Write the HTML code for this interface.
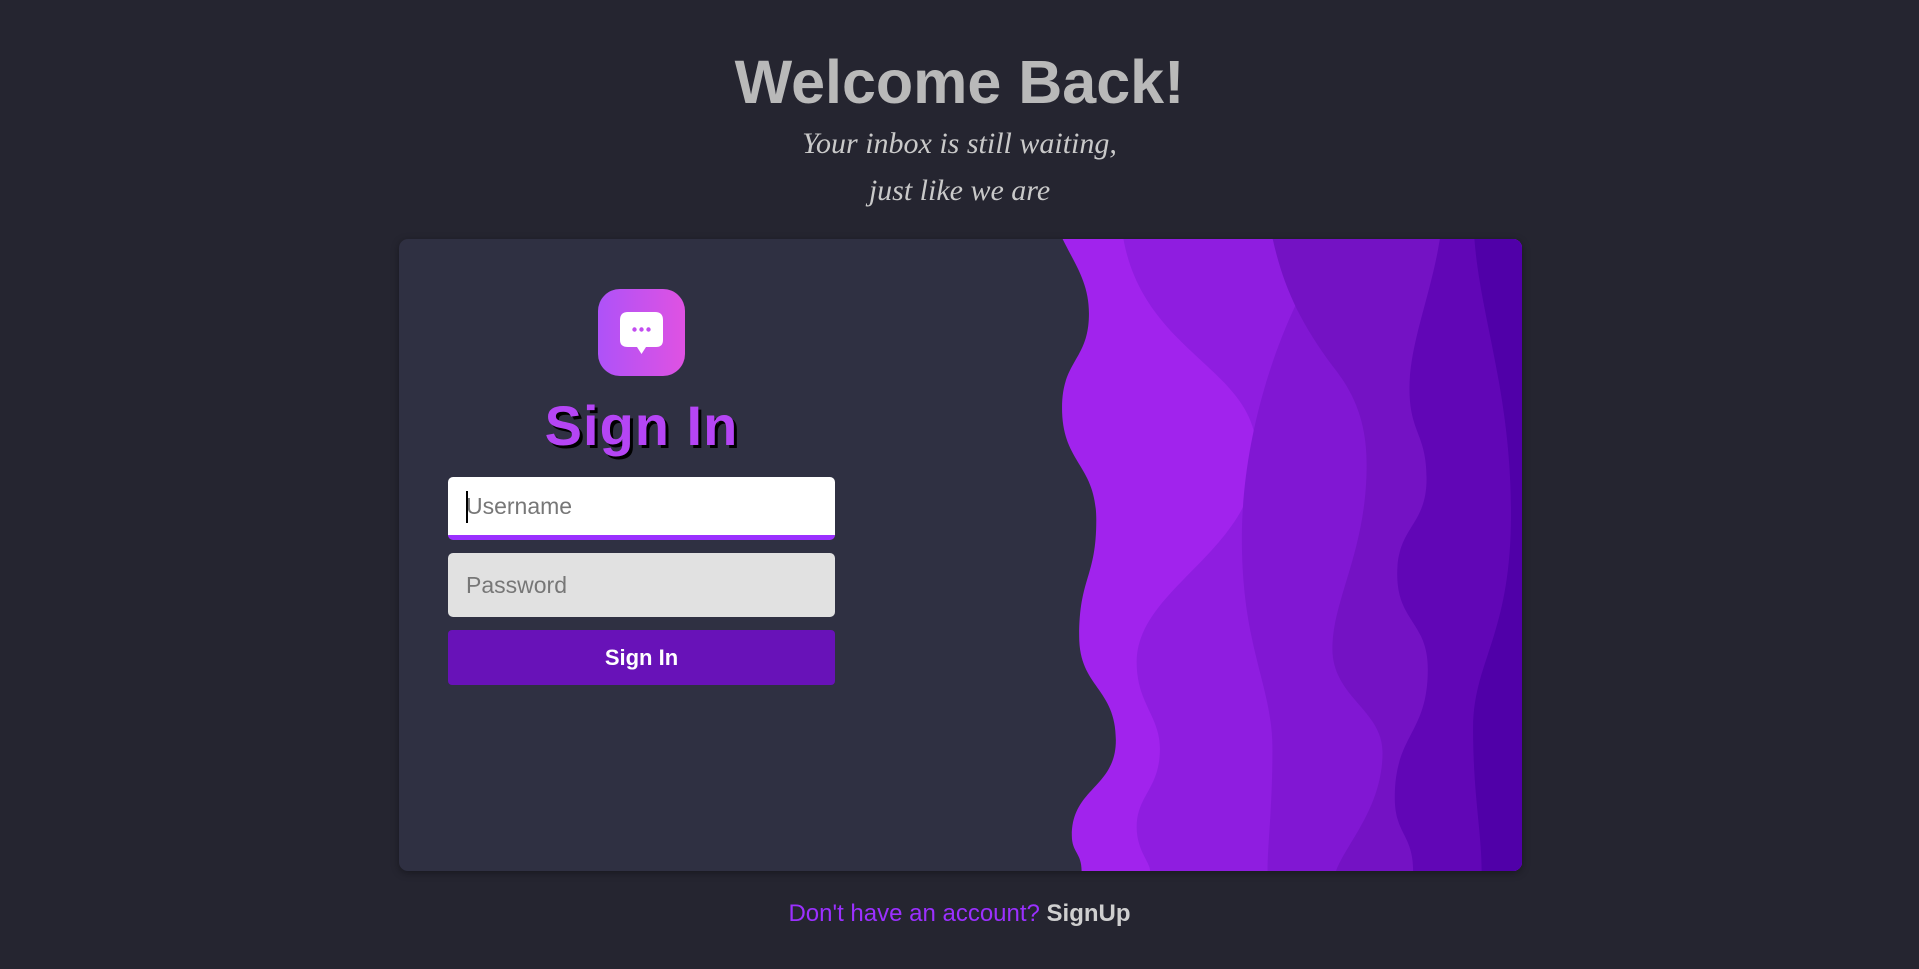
<!DOCTYPE html>
<html><head><meta charset="utf-8"><style>
html,body{margin:0;padding:0}
body{width:1919px;height:969px;background:#252530;position:relative;overflow:hidden;font-family:"Liberation Sans",sans-serif}
.h1{position:absolute;left:0;width:1919px;top:44px;text-align:center;font-size:61px;font-weight:bold;color:#b9b9b9;line-height:76px}
.sub{position:absolute;left:0;width:1919px;text-align:center;font-family:"Liberation Serif",serif;font-style:italic;font-size:30px;color:#c9c9c9}
.card{position:absolute;left:399px;top:239px;width:1123px;height:632px;background:#2f3042;border-radius:9px;overflow:hidden;box-shadow:0 2px 8px rgba(0,0,0,.35)}
.card svg{position:absolute;left:0;top:0;width:100%;height:100%}
.logo{position:absolute;left:199px;top:50px;width:87px;height:87px;border-radius:22px;background:linear-gradient(90deg,#ae52f8,#df52e2)}
.title{position:absolute;left:0;width:485px;top:150px;text-align:center;font-size:56px;font-weight:bold;color:#b545f5;text-shadow:3px 3px 0 #000;line-height:74px;letter-spacing:1px}
.in{position:absolute;left:49px;width:387px;border-radius:5px;box-sizing:border-box;padding-left:18px;font-size:23px;color:#777;font-family:"Liberation Sans",sans-serif}
.u{top:238px;height:63px;background:#fff;border-bottom:5px solid #9b30ff;line-height:58px}
.p{top:314px;height:64px;background:#e1e1e1;line-height:64px}
.btn{position:absolute;left:49px;top:391px;width:387px;height:55px;background:#6812b8;border-radius:4px;color:#fff;font-weight:bold;font-size:22px;text-align:center;line-height:55px}
.caret{position:absolute;left:18px;top:14px;width:2px;height:32px;background:#000}
.foot{position:absolute;left:0;width:1919px;top:900px;text-align:center;font-size:24px;color:#9b30ff}
.foot b{color:#cfcfcf;font-weight:bold}
</style></head><body>
<div class="h1">Welcome Back!</div>
<div class="sub" style="top:127px">Your inbox is still waiting,</div>
<div class="sub" style="top:174px">just like we are</div>
<div class="card">
<svg viewBox="326 195 918 517" preserveAspectRatio="none">
<path fill="#a123ed" d="M866,180 L868,194 C878,215 890,230 890,256 C890,294 868,294 868,333 C868,379 896,379 896,425 C896,472 882,472 882,520 C882,562 912,562 912,605 C912,644 876,644 876,683 C876,697 884,697 884,712 L1250,712 L1250,180 Z"/>
<path fill="#8f1de0" d="M916,180 L918,194 C935,290 1027,300 1027,370 C1027,450 929,480 929,541 C929,575 948,585 948,612 C948,645 929,650 929,676 C929,695 940,705 940,712 L1250,712 L1250,180 Z"/>
<path fill="#8117d3" d="M1036,180 L1040,194 L1059,249 C1035,300 1015,370 1015,440 C1015,530 1040,560 1040,612 C1040,660 1036,690 1036,712 L1250,712 L1250,180 Z"/>
<path fill="#7412c4" d="M1036,180 L1040,194 C1048,230 1060,260 1090,300 C1110,325 1117,350 1117,380 C1117,450 1089,490 1089,530 C1089,570 1130,580 1130,615 C1130,660 1100,690 1092,712 L1250,712 L1250,180 Z"/>
<path fill="#6106b6" d="M1179,180 L1177,194 C1170,240 1152,280 1152,317 C1152,354 1166,354 1166,391 C1166,430 1142,430 1142,469 C1142,508 1167,508 1167,547 C1167,600 1140,600 1140,652 C1140,682 1155,682 1155,712 L1250,712 L1250,180 Z"/>
<path fill="#5000a8" d="M1203,180 L1205,194 C1210,260 1235,320 1235,420 C1235,520 1204,540 1204,595 C1204,650 1211,680 1211,712 L1250,712 L1250,180 Z"/>
</svg>
<div class="logo">
<svg viewBox="0 0 87 87" style="width:87px;height:87px">
<path fill="#fff" d="M30,23 H57 Q65,23 65,31 V51 Q65,58 58,58 H48 L43.5,65 L39,58 H30 Q22,58 22,51 V31 Q22,23 30,23 Z"/>
<circle cx="36.5" cy="40.5" r="2.2" fill="#c24cf0"/><circle cx="43.5" cy="40.5" r="2.2" fill="#c24cf0"/><circle cx="50.5" cy="40.5" r="2.2" fill="#c24cf0"/>
</svg></div>
<div class="title">Sign In</div>
<div class="in u"><div class="caret"></div>Username</div>
<div class="in p">Password</div>
<div class="btn">Sign In</div>
</div>
<div class="foot">Don't have an account? <b>SignUp</b></div>
</body></html>
